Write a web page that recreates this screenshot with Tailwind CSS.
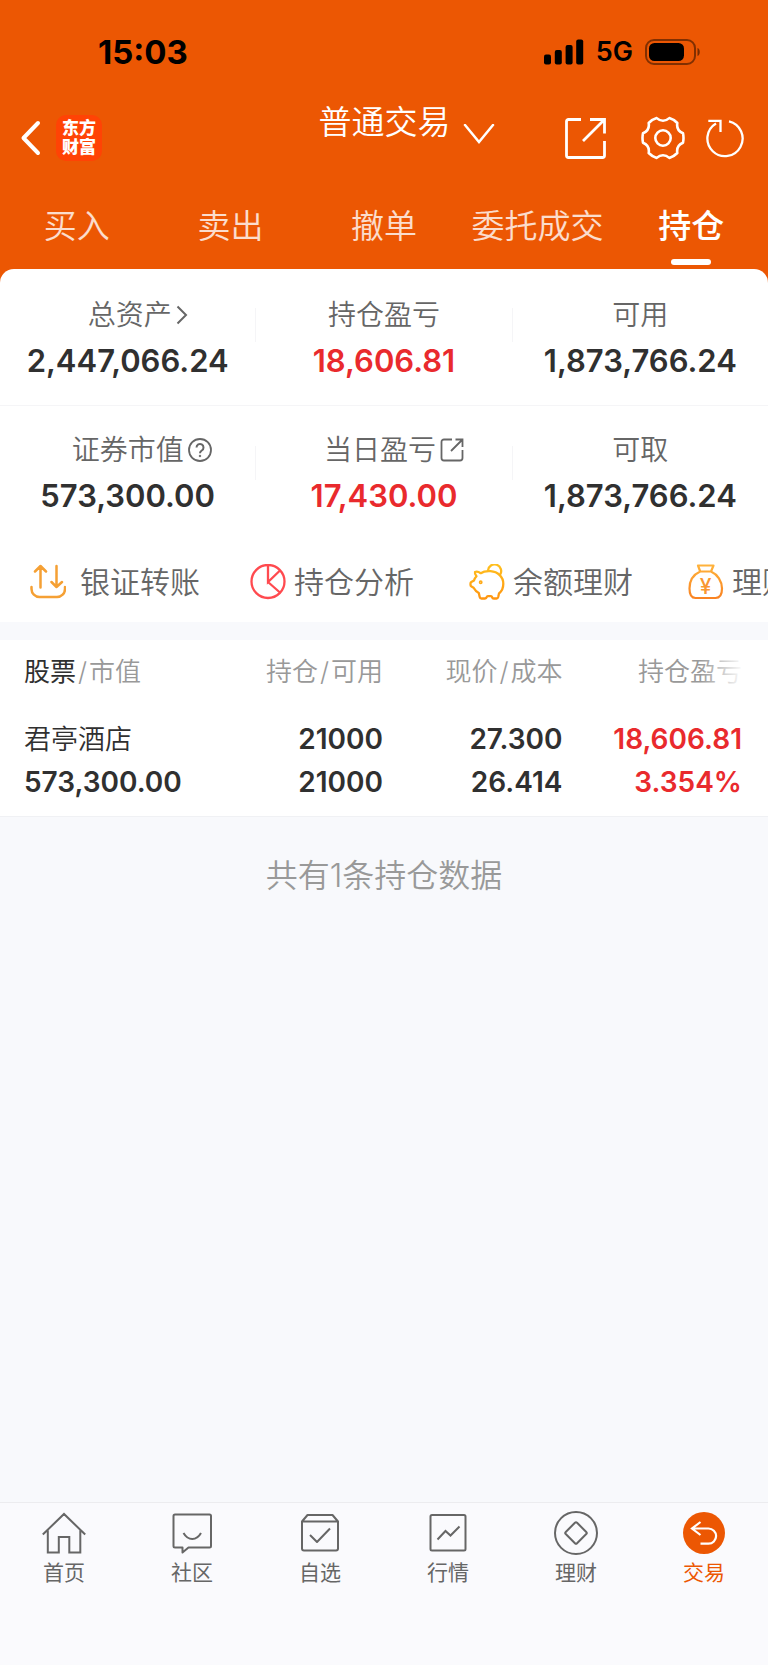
<!DOCTYPE html>
<html lang="zh-CN">
<head>
    <meta charset="UTF-8">
    <meta name="viewport" content="width=device-width, initial-scale=1.0">
    <title>普通交易 - 持仓</title>
    <script src="https://cdn.jsdelivr.net/npm/@tailwindcss/browser@4"></script>
</head>
<body class="min-h-screen flex flex-col overflow-x-hidden bg-[#f8f9fc] text-[#303030] font-['Inter','Noto_Sans_CJK_SC',sans-serif]">

    <header class="bg-[#ec5703] text-white">
        <!-- Status bar -->
        <div class="flex h-[100px] items-center justify-between pt-1 pl-[98px] pr-[67px] text-black">
            <span class="text-[33px] font-bold leading-10">15:03</span>
            <div class="flex items-center gap-3">
                <svg class="h-[26px] w-10" viewBox="0 0 40 26" fill="currentColor">
                    <rect x="0" y="15.5" width="7" height="10" rx="2"/>
                    <rect x="10.8" y="11" width="7" height="14.5" rx="2"/>
                    <rect x="21.6" y="6" width="7" height="19.5" rx="2"/>
                    <rect x="32.2" y="0.5" width="7" height="25" rx="2"/>
                </svg>
                <span class="text-[27px] font-semibold leading-8">5G</span>
                <svg class="h-[26px] w-14" viewBox="0 0 56 26">
                    <rect x="1" y="1" width="49" height="24" rx="8" fill="none" stroke="#000" stroke-opacity=".45" stroke-width="2"/>
                    <rect x="4" y="4" width="35" height="18" rx="5.5"/>
                    <path d="M52.5 9c3 1 3 7 0 8z" fill-opacity=".5"/>
                </svg>
            </div>
        </div>

        <!-- Title row -->
        <div class="grid h-[76px] grid-cols-[1fr_auto_1fr] items-center pl-5 pr-[23px]">
            <div class="flex items-center gap-3">
                <button aria-label="返回">
                    <svg class="h-9 w-6" viewBox="0 0 24 36" fill="none" stroke="currentColor" stroke-width="4" stroke-linecap="round" stroke-linejoin="round"><path d="M18 3 3.500 18 18 33"/></svg>
                </button>
                <a href="#" class="flex size-[46px] items-center justify-center rounded-[10px] bg-[#ff4305] text-center text-[17px] font-black leading-[19px]">东方<br>财富</a>
            </div>
            <button class="flex items-end gap-3 self-start pl-12">
                <span class="text-[33px] font-[350] leading-[44px]">普通交易</span>
                <svg class="h-5 w-8" viewBox="0 0 32 20" fill="none" stroke="currentColor" stroke-width="2.500" stroke-linecap="round"><path d="M2 1 16 18 30 1"/></svg>
            </button>
            <div class="flex items-center justify-end">
                <button aria-label="分享" class="mr-[34px]">
                    <svg class="size-11" viewBox="0 0 44 44" fill="none" stroke="currentColor" stroke-width="2.800"><path d="M18 3.500H5.500a2 2 0 0 0-2 2v34a2 2 0 0 0 2 2h34a2 2 0 0 0 2-2V25M27 3.500h14.500v14M41 4 20 25"/></svg>
                </button>
                <button aria-label="设置" class="mr-5">
                    <svg class="size-11" viewBox="0 0 44 44" fill="none" stroke="currentColor" stroke-width="2.600" stroke-linejoin="round">
                        <path d="M42 17.300Q43 22 42 26.700C37.500 28.500 35.500 32 36.300 37Q33 40.500 28.300 41.900C24.500 38.500 19.500 38.500 15.700 41.900Q11 40.500 7.700 37C8.500 32 6.500 28.500 2 26.700Q1 22 2 17.300C6.500 15.500 8.500 12 7.700 7Q11 3.500 15.700 2.100C19.500 5.500 24.500 5.500 28.300 2.100Q33 3.500 36.300 7C35.500 12 37.500 15.500 42 17.300Z"/>
                        <circle cx="22" cy="22" r="7.700"/>
                    </svg>
                </button>
                <button aria-label="刷新">
                    <svg class="size-10" viewBox="0 0 40 40" fill="none" stroke="currentColor" stroke-width="2.300"><path d="M24 3.400A17.600 17.600 0 1 1 11 5.400M3.300 2.800H15.500V14"/></svg>
                </button>
            </div>
        </div>

        <!-- Tabs -->
        <nav class="grid grid-cols-5 pt-[31px] pb-1 text-[33px] leading-[38px]">
            <a href="#" class="text-center font-[350] text-white/80">买入</a>
            <a href="#" class="text-center font-[350] text-white/80">卖出</a>
            <a href="#" class="text-center font-[350] text-white/80">撤单</a>
            <a href="#" class="text-center font-[350] text-white/80">委托成交</a>
            <a href="#" class="flex flex-col items-center font-medium">持仓<span class="mt-[14px] h-[6px] w-10 rounded-full bg-white"></span></a>
        </nav>
    </header>

    <!-- Account summary -->
    <div class="bg-[#ec5703]">
        <section class="rounded-t-[14px] bg-white">
            <div class="flex border-b border-[#f5f5f7] pt-7 pb-6">
                <div class="flex-1 text-center">
                    <a href="#" class="flex items-center justify-center gap-1 pl-5 text-[28px] font-[350] leading-9 text-[#666]">总资产
                        <svg class="h-5 w-3" viewBox="0 0 12 20" fill="none" stroke="currentColor" stroke-width="2"><path d="M1.500 1.500 10 10 1.500 18.500"/></svg>
                    </a>
                    <p class="mt-2 text-[31px] font-semibold leading-10">2,447,066.24</p>
                </div>
                <span class="mt-[11px] h-[34px] w-px bg-[#f5f5f7]"></span>
                <div class="flex-1 text-center">
                    <p class="text-[28px] font-[350] leading-9 text-[#666]">持仓盈亏</p>
                    <p class="mt-2 text-[31px] font-semibold leading-10 text-[#e92a2d]">18,606.81</p>
                </div>
                <span class="mt-[11px] h-[34px] w-px bg-[#f5f5f7]"></span>
                <div class="flex-1 text-center">
                    <p class="text-[28px] font-[350] leading-9 text-[#666]">可用</p>
                    <p class="mt-2 text-[31px] font-semibold leading-10">1,873,766.24</p>
                </div>
            </div>
            <div class="flex pt-[26px] pb-[26px]">
                <div class="flex-1 text-center">
                    <button class="flex w-full items-center justify-center gap-1 pl-7 text-[28px] font-[350] leading-9 text-[#666]">证券市值
                        <svg class="size-6" viewBox="0 0 24 24" fill="none" stroke="currentColor" stroke-width="1.800"><circle cx="12" cy="12" r="11"/><path d="M8.500 9.500a3.500 3.500 0 1 1 5.300 3c-1.300.8-1.800 1.300-1.800 2.800" stroke-width="2"/><circle cx="12" cy="18" r=".8" fill="currentColor" stroke-width="1"/></svg>
                    </button>
                    <p class="mt-2 text-[31px] font-semibold leading-10">573,300.00</p>
                </div>
                <span class="mt-[14px] h-[34px] w-px bg-[#f5f5f7]"></span>
                <div class="flex-1 text-center">
                    <a href="#" class="flex items-center justify-center gap-1 pl-5 text-[28px] font-[350] leading-9 text-[#666]">当日盈亏
                        <svg class="size-6" viewBox="0 0 24 24" fill="none" stroke="currentColor" stroke-width="1.800"><path d="M12 1.500H4a2.500 2.500 0 0 0-2.500 2.500v16a2.500 2.500 0 0 0 2.500 2.500h16a2.500 2.500 0 0 0 2.500-2.500v-8M15.500 1.500h7V9M22 2 11 13"/></svg>
                    </a>
                    <p class="mt-2 text-[31px] font-semibold leading-10 text-[#e92a2d]">17,430.00</p>
                </div>
                <span class="mt-[14px] h-[34px] w-px bg-[#f5f5f7]"></span>
                <div class="flex-1 text-center">
                    <p class="text-[28px] font-[350] leading-9 text-[#666]">可取</p>
                    <p class="mt-2 text-[31px] font-semibold leading-10">1,873,766.24</p>
                </div>
            </div>

            <!-- Quick actions, scrolls sideways -->
            <div class="flex h-20 overflow-hidden pl-[30px] text-[30px] font-[350] text-[#666]">
                <a href="#" class="flex w-[220px] shrink-0 items-center gap-[14px]">
                    <svg class="size-9" viewBox="0 0 36 36" fill="none" stroke="#f5a034" stroke-width="2.500" stroke-linecap="round" stroke-linejoin="round"><path d="M10.500 23.500V2.500M5 7.500l5.500-5.500L16 7.500M26.500 2v20.500M21.500 18l5 5 5.500-5M1.500 23v2a8 8 0 0 0 8 8h17.500a8 8 0 0 0 8-8v-2"/></svg>
                    银证转账
                </a>
                <a href="#" class="flex w-[219px] shrink-0 items-center gap-2">
                    <svg class="size-9" viewBox="0 0 36 36" fill="none" stroke="#ff4a4f" stroke-width="2.300"><circle cx="18" cy="17.500" r="16.500"/><path d="M18 1v17L30 6.500M18 18l12.500 11"/></svg>
                    持仓分析
                </a>
                <a href="#" class="flex w-[219px] shrink-0 items-center gap-2">
                    <svg class="size-9" viewBox="0 0 36 36" fill="none" stroke="url(#gold)" stroke-width="2.300" stroke-linecap="round" stroke-linejoin="round">
                        <defs><linearGradient id="gold" x1="0" y1="0" x2="0" y2="36" gradientUnits="userSpaceOnUse"><stop stop-color="#ffc01e"/><stop offset="1" stop-color="#ff9410"/></linearGradient></defs>
                        <path d="M6 8c2-.8 4 0 5.700 1.200C14.500 7.300 18 7 21.500 7.200 29 7.800 34.300 13 34.300 19.800c0 4.200-1.600 7.600-4.300 9.700l-.8 3.500q-.4 1.500-1.700 1.500h-2.700q-1.400 0-1.700-1.300-.3-1-1.200-1h-3q-.9 0-1.200 1-.4 1.300-1.700 1.300h-3.500q-1.500 0-1.800-1.500l-.9-4C7 27.500 5.500 25.500 4.600 23.800L2.500 22.600Q1.500 22 1.500 21v-1.500q0-.9.8-1.400L5 16.500c.5-1.800 1.300-3 2.500-4.200Q5.500 10 6 8z"/>
                        <path d="M19 6.500A6.600 6.600 0 1 1 31.200 10.500"/>
                        <circle cx="11.700" cy="18.300" r=".8"/>
                    </svg>
                    余额理财
                </a>
                <a href="#" class="flex w-[219px] shrink-0 items-center gap-2">
                    <svg class="size-9" viewBox="0 0 36 36" fill="none" stroke="url(#amber)" stroke-width="2.200" stroke-linejoin="round">
                        <defs><linearGradient id="amber" x1="0" y1="0" x2="0" y2="36" gradientUnits="userSpaceOnUse"><stop stop-color="#ffb43c"/><stop offset="1" stop-color="#f98020"/></linearGradient></defs>
                        <path d="M10 1.500h15.500L23 7.500H12.200zM12.200 7.500C5.500 10.500 1.500 17 1.500 24.500c0 6 2 9.500 6 9.500h20c4 0 6.500-3.500 6.500-9.500C34 17 29.500 10.500 23 7.500"/>
                        <text x="17.500" y="30" text-anchor="middle" font-size="21" font-weight="500" fill="#f99730" stroke="none">¥</text>
                    </svg>
                    理财
                </a>
            </div>
        </section>
    </div>

    <!-- Positions -->
    <section class="relative mt-[18px] border-b border-[#f0f1f4] bg-white pl-6 pr-[26px]">
        <table class="w-full table-fixed text-right">
            <thead>
                <tr class="h-16 text-[26px] leading-8 text-[#999]">
                    <th class="w-1/4 whitespace-nowrap text-left font-[350]"><span class="font-normal text-[#303030]">股票</span><span class="mx-[2px]">/</span>市值</th>
                    <th class="w-1/4 whitespace-nowrap font-[350]">持仓<span class="mx-[2px]">/</span>可用</th>
                    <th class="w-1/4 whitespace-nowrap font-[350]">现价<span class="mx-[2px]">/</span>成本</th>
                    <th class="w-1/4 whitespace-nowrap font-[350]">持仓盈亏</th>
                </tr>
            </thead>
            <tbody>
                <tr class="text-[28px] font-semibold leading-[43px]">
                    <td class="whitespace-nowrap pt-[14px] pb-3 text-left"><span class="block text-[27px] font-[350]">君亭酒店</span>573,300.00</td>
                    <td class="pt-[14px] pb-3">21000<br>21000</td>
                    <td class="pt-[14px] pb-3">27.300<br>26.414</td>
                    <td class="pt-[14px] pb-3 text-[#e92a2d]">18,606.81<br>3.354%</td>
                </tr>
            </tbody>
        </table>
        <div class="absolute top-0 right-6 h-16 w-11 bg-linear-to-r from-white/0 to-white"></div>
    </section>

    <p class="py-10 text-center text-[32px] font-[350] leading-[38px] text-[#999]">共有1条持仓数据</p>

    <!-- Bottom navigation -->
    <nav class="mt-auto grid grid-cols-6 border-t border-[#ececef] bg-[#fafafd] pt-2 pb-[78px] text-[21px] leading-7 text-[#666]">
        <a href="#" class="flex flex-col items-center gap-1">
            <svg class="size-11" viewBox="0 0 44 44" fill="none" stroke="currentColor" stroke-width="2"><path d="M.8 23.500 22 3l21.200 20.500M5.800 19.500v22h11V26h10.500v15.500h11v-22"/></svg>
            首页
        </a>
        <a href="#" class="flex flex-col items-center gap-1">
            <svg class="size-11" viewBox="0 0 44 44" fill="none" stroke="currentColor" stroke-width="2" stroke-linejoin="round"><path d="M5 3.500h34.500q1.500 0 1.500 1.500v30q0 1.500-1.500 1.500H18.500l-6 5v-5H5q-1.500 0-1.500-1.500V5q0-1.500 1.500-1.500zM13.500 22q3.500 6 8.800 6t8.700-6"/></svg>
            社区
        </a>
        <a href="#" class="flex flex-col items-center gap-1">
            <svg class="size-11" viewBox="0 0 44 44" fill="none" stroke="currentColor" stroke-width="2" stroke-linejoin="round"><path d="M4 10.500 9.500 4h25l5.500 6.500V37.500q0 2-2 2H6q-2 0-2-2zH40M12 24l7 7L32 17.500"/></svg>
            自选
        </a>
        <a href="#" class="flex flex-col items-center gap-1">
            <svg class="size-11" viewBox="0 0 44 44" fill="none" stroke="currentColor" stroke-width="2"><rect x="4.500" y="4" width="35" height="35.500" rx="1.500"/><path d="m11.500 28.500 8-8.500 5 4.500 9-9"/></svg>
            行情
        </a>
        <a href="#" class="flex flex-col items-center gap-1">
            <svg class="size-11" viewBox="0 0 44 44" fill="none" stroke="currentColor" stroke-width="2"><circle cx="22" cy="22" r="21"/><rect x="14" y="14" width="16" height="16" rx="1.500" transform="rotate(45 22 22)"/></svg>
            理财
        </a>
        <a href="#" class="flex flex-col items-center gap-1 text-[#ec5703]">
            <svg class="size-11" viewBox="0 0 44 44" fill="none" stroke="#fff" stroke-width="2.200"><circle cx="22" cy="22" r="21" fill="#ec5703" stroke="none"/><path d="M18.500 11 10 17.500l8.500 6.500M10 17.500h16.500a7.600 7.600 0 0 1 0 15.200H18.500"/></svg>
            交易
        </a>
    </nav>

</body>
</html>
